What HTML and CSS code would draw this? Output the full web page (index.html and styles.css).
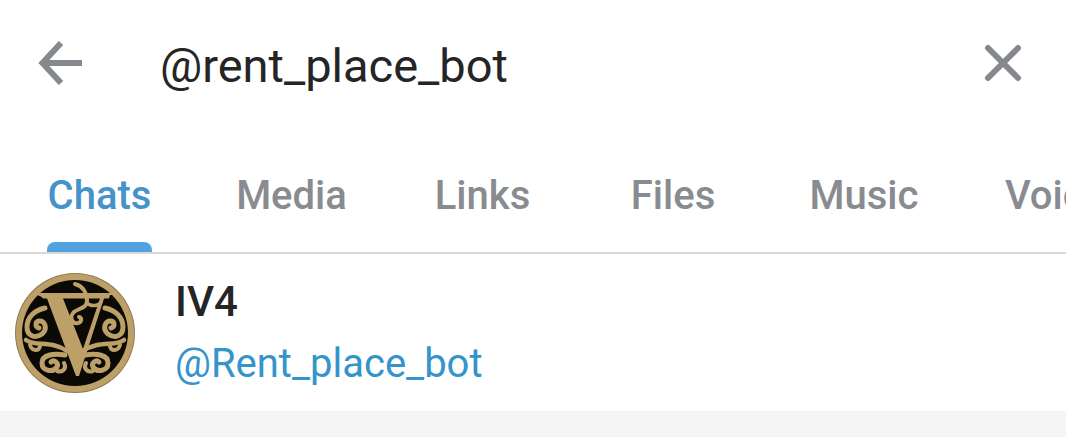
FILE: index.html
```html
<!DOCTYPE html>
<html lang="en">
  <head>
    <meta charset="utf-8" />
    <meta name="viewport" content="width=device-width, initial-scale=1.0" />
    <title>Search</title>
    <link rel="stylesheet" href="styles.css">
  </head>
  <body>
    <header class="search-bar">
      <svg class="back-icon" viewBox="0 0 44 44" width="44" height="44">
        <path d="M44 22H5M23 2L4.500 22 23 42" fill="none" stroke="#85888d" stroke-width="6" />
      </svg>
      <span class="search-text">@rent_place_bot</span>
      <svg class="close-icon" viewBox="0 0 40 40" width="40" height="40">
        <path d="M5 5L35 35M35 5L5 35" fill="none" stroke="#85888d" stroke-width="6" stroke-linecap="round" />
      </svg>
    </header>

    <nav class="tabs">
      <div class="tab tab-wide tab-active"><span>Chats</span><i class="tab-bar"></i></div>
      <div class="tab tab-wide"><span>Media</span></div>
      <div class="tab tab-narrow"><span>Links</span></div>
      <div class="tab"><span>Files</span></div>
      <div class="tab"><span>Music</span></div>
      <div class="tab"><span>Voice</span></div>
    </nav>

    <section class="result">
      <svg class="avatar" viewBox="0 0 120 120" width="120" height="120">
        <defs>
          <g id="scroll" fill="none" stroke="#bd9f68" stroke-width="5" stroke-linecap="round">
            <path d="M30 35C20 37 12 44 12 54C12 63 20 66 27 61C33 56 30 47 24 48C20 49 20 54 24 55" />
            <path d="M11 67C20 74 36 67 52 78" stroke-width="4.500" />
            <path d="M15 72C17 79 25 78 25 73" stroke-width="4" />
            <path d="M50 82C38 80 27 82 27 90C27 98 38 100 42 94C44 90 39 86 36 89" />
            <path d="M42 98C48 100 52 95 49 90" stroke-width="4" />
          </g>
        </defs>
        <circle cx="60" cy="60" r="60" fill="#8f7a4f" />
        <circle cx="60" cy="60" r="59" fill="#bd9f68" />
        <circle cx="60" cy="60" r="53" fill="#0b0906" />
        <use href="#scroll" />
        <use href="#scroll" transform="matrix(-1 0 0 1 120 0)" />
        <path d="M60 11C68 13 72 20 72 28C72 36 62 35 58 40C54 46 58 51 63 50C67 49 67 45 64 44" fill="none" stroke="#bd9f68" stroke-width="4" stroke-linecap="round" />
        <path d="M72 30C76 34 84 33 86 29" fill="none" stroke="#bd9f68" stroke-width="3.500" stroke-linecap="round" />
        <path d="M22 20H98V22H95L94 25.500H89L64 103H61L32 25.500H28C27 24 25 23 22 22ZM48 25.500L68 76L85 25.500Z" fill="#bd9f68" fill-rule="evenodd" />
      </svg>
      <div class="result-info">
        <div class="result-name">IV4</div>
        <div class="result-handle">@Rent_place_bot</div>
      </div>
    </section>

    <div class="rest"></div>
  </body>
</html>
```

FILE: styles.css
```css
html,
body {
  margin: 0;
  height: 100%;
  overflow: hidden;
  background: #fff;
}

body {
  display: flex;
  flex-direction: column;
  font-family: Roboto, "Liberation Sans", sans-serif;
}

.search-bar {
  display: flex;
  align-items: center;
  height: 132px;
  padding: 0 43px 6px 38px;
  box-sizing: border-box;
  flex: none;
}

.search-text {
  flex: 1;
  margin: 4px 0 0 78px;
  font-size: 47px;
  color: #252525;
}

.tabs {
  display: flex;
  height: 120px;
  padding-left: 3.5px;
  border-bottom: 2px solid #d9d9d9;
  overflow: hidden;
  flex: none;
}

.tab {
  display: flex;
  flex-direction: column;
  align-items: center;
  flex: none;
  width: 191px;
  padding-top: 40px;
  box-sizing: border-box;
  font-size: 40px;
  font-weight: 500;
  color: #888b90;
}

.tab-wide {
  width: 192px;
}

.tab-narrow {
  width: 190px;
}

.tab-active {
  color: #4593c9;
}

.tab-bar {
  width: 105px;
  height: 10px;
  margin-top: auto;
  border-radius: 8px 8px 0 0;
  background: #50a2e1;
}

.result {
  display: flex;
  align-items: center;
  height: 157px;
  padding-left: 15px;
  flex: none;
}

.result-info {
  margin-left: 40px;
}

.result-name {
  font-size: 42px;
  font-weight: 500;
  line-height: 48px;
  color: #252525;
}

.result-handle {
  margin-top: 14px;
  font-size: 40px;
  line-height: 47px;
  color: #3594c9;
}

.rest {
  flex: 1;
  background: #f5f5f5;
}
```
